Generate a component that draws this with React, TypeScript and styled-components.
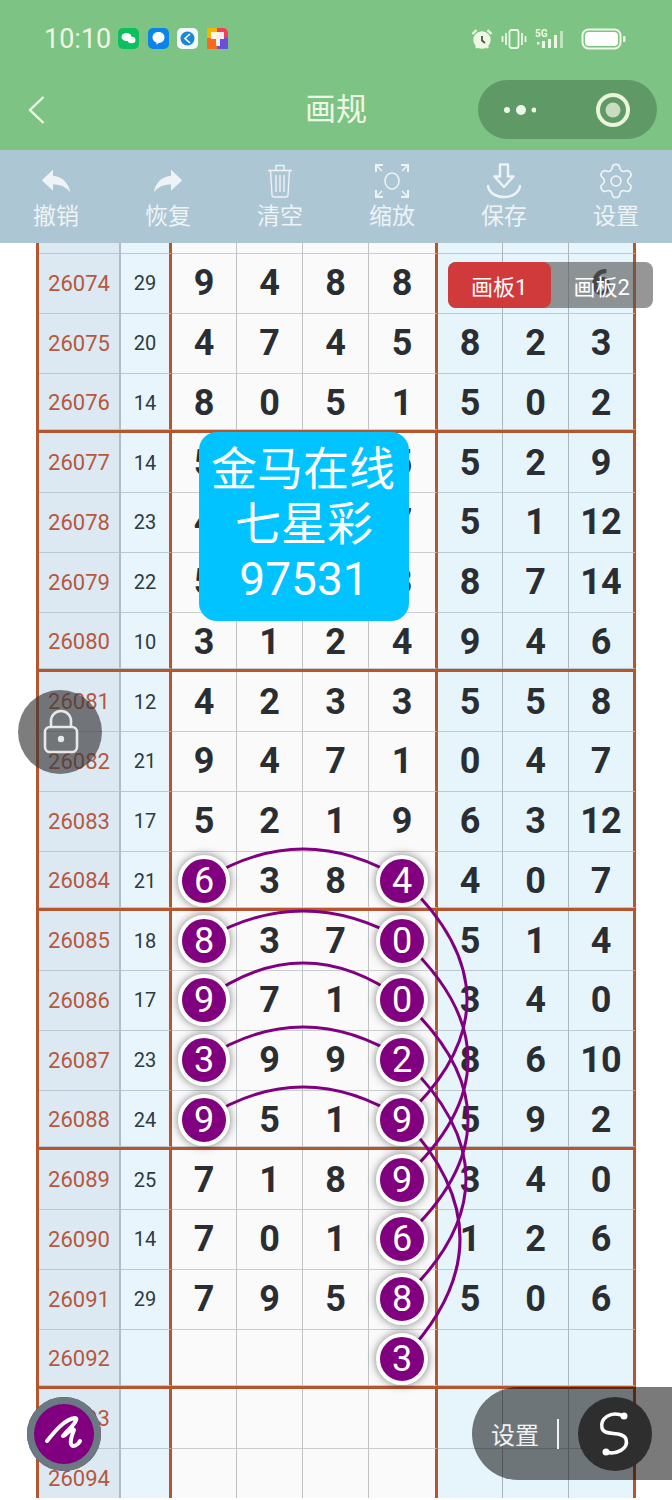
import React from "react"
import styled, { createGlobalStyle } from "styled-components"
import { Settings } from "lucide-react"

const GlobalStyle = createGlobalStyle`
  html, body { margin: 0; padding: 0; background: #fff; }
  body { font-family: Roboto, "Noto Sans CJK SC", sans-serif; }
`

const Page = styled.div`
  width: 672px;
  height: 1500px;
  display: flex;
  flex-direction: column;
  overflow: hidden;
  background: #fff;
`
const StatusBar = styled.div`
  height: 80px;
  box-sizing: border-box;
  padding: 22px 45px 0 44px;
  background: #7dc383;
  display: flex;
  align-items: flex-start;
  color: #eef7e6;
`
const Clock = styled.span`
  font-size: 27px;
  line-height: 34px;
  margin-right: 7px;
`
const AppIcons = styled.div`
  display: flex;
  gap: 8.5px;
  margin-top: 6px;
`
const AppIcon = styled.svg`
  width: 21px;
  height: 21px;
  display: block;
`
const StatusIcons = styled.div`
  margin-left: auto;
  display: flex;
  align-items: center;
  height: 34px;
  gap: 8px;
`
const NavBar = styled.div`
  height: 70px;
  background: #7dc383;
  position: relative;
  display: flex;
  align-items: flex-start;
  justify-content: space-between;
  padding: 0 15px 0 26px;
  box-sizing: border-box;
`
const Title = styled.div`
  position: absolute;
  left: 0;
  right: 0;
  top: 12px;
  text-align: center;
  color: #eef7e6;
  font-size: 31px;
  line-height: 36px;
`
const Capsule = styled.div`
  width: 179px;
  height: 59px;
  border-radius: 30px;
  background: #5f9a66;
  display: flex;
  align-items: center;
  justify-content: space-between;
  box-sizing: border-box;
  padding: 0 27px 0 26px;
`
const Toolbar = styled.div`
  height: 93px;
  background: #adc6d4;
  display: grid;
  grid-template-columns: repeat(6, 112px);
`
const ToolItem = styled.div`
  display: flex;
  flex-direction: column;
  align-items: center;
  color: #eef3f6;
  padding-top: 13px;
  font-size: 23px;
  line-height: 30px;
  svg { display: block; width: 36px; height: 36px; margin-bottom: 3px; }
  svg.lucide { width: 40px; height: 40px; margin: -2px 0 1px; }
`
const Board = styled.div`
  position: relative;
  height: 1255px;
  overflow: hidden;
`
const Row = styled.div<{ $heavy?: boolean; $stub?: boolean }>`
  display: grid;
  grid-template-columns: 82px 51px 65px 66px 66px 69px 65px 66px 67px;
  width: 600px;
  margin-left: 36px;
  height: ${(p) => (p.$stub ? "11px" : "59.75px")};
  box-sizing: border-box;
  border-left: 3px solid #b5562f;
  border-bottom: ${(p) => (p.$heavy ? "3px solid #b5562f" : "0")};
  > div { padding-top: ${(p) => (p.$heavy ? "3px" : "0")}; }
`
const Cell = styled.div<{ $kind: "issue" | "sum" | "main" | "side"; $wall?: boolean }>`
  display: flex;
  align-items: center;
  justify-content: center;
  box-sizing: border-box;
  border-bottom: 1px solid ${(p) => (p.$kind === "main" ? "#c9cdd0" : "#bcc8d0")};
  border-right: ${(p) =>
    p.$wall ? "3px solid #b5562f" : p.$kind === "issue" ? "2px solid #aebcc6" : p.$kind === "main" ? "1px solid #bfc3c6" : "1px solid #aab6be"};
  background: ${(p) =>
    p.$kind === "issue" ? "#dce9f2" : p.$kind === "sum" ? "#e8f5fc" : p.$kind === "main" ? "#fafafa" : "#e6f4fc"};
  color: ${(p) => (p.$kind === "issue" ? "#b5583f" : p.$kind === "sum" ? "#2d3a40" : "#2a2e33")};
  font-size: ${(p) => (p.$kind === "issue" ? "22px" : p.$kind === "sum" ? "20px" : "36px")};
  font-weight: ${(p) => (p.$kind === "main" || p.$kind === "side" ? 700 : 400)};
`
const Ball = styled.span`
  position: relative;
  z-index: 2;
  width: 44px;
  height: 44px;
  flex: none;
  border-radius: 50%;
  box-sizing: content-box;
  border: 4px solid #fff;
  background: #800080;
  box-shadow: 0 0 8px rgba(0, 0, 0, 0.5);
  color: #fff;
  font-size: 36px;
  font-weight: 400;
  display: flex;
  align-items: center;
  justify-content: center;
`
const Curves = styled.svg`
  position: absolute;
  left: 0;
  top: 0;
  z-index: 1;
`
const Stamp = styled.div`
  position: absolute;
  z-index: 3;
  left: 199px;
  top: 189px;
  width: 210px;
  height: 189px;
  box-sizing: border-box;
  padding-top: 10px;
  border-radius: 18px;
  background: #00c3ff;
  color: #fff;
  font-size: 46px;
  line-height: 55px;
  text-align: center;
  text-indent: -2px;
`
const Tabs = styled.div`
  position: absolute;
  z-index: 3;
  left: 448px;
  top: 19px;
  display: flex;
  width: 205px;
  height: 46px;
  border-radius: 8px;
  background: rgba(85, 85, 85, 0.62);
  color: #fff;
  font-size: 22px;
`
const Tab = styled.div<{ $active?: boolean }>`
  flex: 1;
  display: flex;
  align-items: center;
  justify-content: center;
  border-radius: 8px;
  background: ${(p) => (p.$active ? "#d13a3a" : "transparent")};
`
const LockButton = styled.div`
  position: absolute;
  z-index: 3;
  left: 18px;
  top: 447px;
  width: 84px;
  height: 84px;
  border-radius: 50%;
  background: rgba(55, 55, 55, 0.65);
`
const PenButton = styled.div`
  position: absolute;
  z-index: 3;
  left: 27px;
  top: 1154px;
  width: 74px;
  height: 74px;
  box-sizing: border-box;
  border-radius: 50%;
  background: #800080;
  box-shadow: inset 0 0 0 7px #6b7a80;
`
const SidePanel = styled.div`
  position: absolute;
  z-index: 3;
  right: 0;
  top: 1144px;
  width: 200px;
  height: 93px;
  box-sizing: border-box;
  border-radius: 47px 0 0 47px;
  background: rgba(0, 0, 0, 0.52);
  display: flex;
  align-items: center;
  padding-left: 19px;
  color: #f2f2f2;
  font-size: 24px;
`
const Divider = styled.span`
  width: 2px;
  height: 30px;
  margin: 0 19px 0 18px;
  background: #f2f2f2;
`
const SketchButton = styled.div`
  width: 74px;
  height: 74px;
  border-radius: 50%;
  background: #2e2e2e;
`

type RowData = { issue: string; sum?: string; main?: string[]; side?: string[]; balls?: number[]; heavy?: boolean }

// digits the stamp and the red tab cover are left empty
const rows: RowData[] = [
  { issue: "26074", sum: "29", main: ["9", "4", "8", "8"], side: ["", "", "6"] },
  { issue: "26075", sum: "20", main: ["4", "7", "4", "5"], side: ["8", "2", "3"] },
  { issue: "26076", sum: "14", main: ["8", "0", "5", "1"], side: ["5", "0", "2"], heavy: true },
  { issue: "26077", sum: "14", main: ["5", "", "", "5"], side: ["5", "2", "9"] },
  { issue: "26078", sum: "23", main: ["4", "", "", "7"], side: ["5", "1", "12"] },
  { issue: "26079", sum: "22", main: ["5", "", "", "3"], side: ["8", "7", "14"] },
  { issue: "26080", sum: "10", main: ["3", "1", "2", "4"], side: ["9", "4", "6"], heavy: true },
  { issue: "26081", sum: "12", main: ["4", "2", "3", "3"], side: ["5", "5", "8"] },
  { issue: "26082", sum: "21", main: ["9", "4", "7", "1"], side: ["0", "4", "7"] },
  { issue: "26083", sum: "17", main: ["5", "2", "1", "9"], side: ["6", "3", "12"] },
  { issue: "26084", sum: "21", main: ["6", "3", "8", "4"], side: ["4", "0", "7"], balls: [0, 3], heavy: true },
  { issue: "26085", sum: "18", main: ["8", "3", "7", "0"], side: ["5", "1", "4"], balls: [0, 3] },
  { issue: "26086", sum: "17", main: ["9", "7", "1", "0"], side: ["3", "4", "0"], balls: [0, 3] },
  { issue: "26087", sum: "23", main: ["3", "9", "9", "2"], side: ["8", "6", "10"], balls: [0, 3] },
  { issue: "26088", sum: "24", main: ["9", "5", "1", "9"], side: ["5", "9", "2"], balls: [0, 3], heavy: true },
  { issue: "26089", sum: "25", main: ["7", "1", "8", "9"], side: ["3", "4", "0"], balls: [3] },
  { issue: "26090", sum: "14", main: ["7", "0", "1", "6"], side: ["1", "2", "6"], balls: [3] },
  { issue: "26091", sum: "29", main: ["7", "9", "5", "8"], side: ["5", "0", "6"], balls: [3] },
  { issue: "26092", main: ["", "", "", "3"], balls: [3], heavy: true },
  { issue: "26093" },
  { issue: "26094" },
]

const blank = ["", "", "", ""]
const blankSide = ["", "", ""]

const BoardRow: React.FC<{ row: RowData }> = ({ row }) => (
  <Row $heavy={row.heavy}>
    <Cell $kind="issue">{row.issue}</Cell>
    <Cell $kind="sum" $wall>{row.sum}</Cell>
    {(row.main ?? blank).map((n, i) => (
      <Cell key={i} $kind="main" $wall={i === 3}>
        {row.balls?.includes(i) ? <Ball>{n}</Ball> : n}
      </Cell>
    ))}
    {(row.side ?? blankSide).map((n, i) => (
      <Cell key={i} $kind="side" $wall={i === 2}>{n}</Cell>
    ))}
  </Row>
)

const StubRow = () => (
  <Row $stub>
    <Cell $kind="issue" />
    <Cell $kind="sum" $wall />
    {blank.map((_, i) => <Cell key={i} $kind="main" $wall={i === 3} />)}
    {blankSide.map((_, i) => <Cell key={i} $kind="side" $wall={i === 2} />)}
  </Row>
)

const arcs = [
  { y: 880, top: 849 },
  { y: 940, top: 911 },
  { y: 1000, top: 963 },
  { y: 1059, top: 1027 },
  { y: 1119, top: 1087 },
]
const loops = [
  { y: 880, peak: 467 },
  { y: 940, peak: 468 },
  { y: 1000, peak: 468 },
  { y: 1059, peak: 466 },
  { y: 1119, peak: 460 },
]

const ToolIcon = {
  undo: (
    <svg viewBox="0 0 24 24" fill="currentColor">
      <path d="M10 8.500V4.500L2.500 11.500l7.500 7v-4.200c5 0 8.700 1.600 11.500 5.200-1-5.200-4.300-10.300-11.500-11z" />
    </svg>
  ),
  redo: (
    <svg viewBox="0 0 24 24" fill="currentColor">
      <path d="M14 8.500V4.500l7.500 7-7.500 7v-4.200c-5 0-8.700 1.600-11.500 5.200 1-5.200 4.300-10.300 11.500-11z" />
    </svg>
  ),
  trash: (
    <svg viewBox="0 0 36 36" fill="none" stroke="currentColor" strokeWidth="1.400">
      <path d="M6 7.500h24M14 7V2.500h8V7M8.500 8l1.500 24q.2 2 2.200 2h11.600q2 0 2.200-2L27.500 8" />
      <path d="M14 12v17M18 12v17M22 12v17" />
    </svg>
  ),
  zoom: (
    <svg viewBox="0 0 36 36" fill="none" stroke="currentColor" strokeWidth="2">
      <ellipse cx="18" cy="18" rx="7" ry="8" strokeWidth="1.500" />
      <path d="M2 9V2h7M27 2h7v7M2 27v7h7M27 34h7v-7" />
      <path d="M2 2l6 6M34 2l-6 6M2 34l6-6M34 34l-6-6" strokeWidth="1.500" />
    </svg>
  ),
  save: (
    <svg viewBox="0 0 36 36" fill="none" stroke="currentColor" strokeWidth="2.400" strokeLinejoin="round" strokeLinecap="round">
      <path d="M14 1.500h8v12h5.500L18 24 8.500 13.500H14z" />
      <path d="M2 23c1 7 8 11 16 11s15-4 16-11" />
    </svg>
  ),
}

const App: React.FC = () => {
  return (
    <Page>
      <GlobalStyle />
      <StatusBar>
        <Clock>10:10</Clock>
        <AppIcons>
          <AppIcon viewBox="0 0 21 21">
            <rect width="21" height="21" rx="5" fill="#0bc15f" />
            <ellipse cx="8.500" cy="9" rx="5" ry="4" fill="#fff" />
            <ellipse cx="13.500" cy="12" rx="4" ry="3.300" fill="#fff" />
          </AppIcon>
          <AppIcon viewBox="0 0 21 21">
            <rect width="21" height="21" rx="5" fill="#0a84e8" />
            <path d="M10.500 4c4 0 6 2.500 6 5.500S14 15 10.500 15l-2 2v-2.500C6 13.500 4.500 12 4.500 9.500 4.500 6.500 6.500 4 10.500 4z" fill="#fff" />
          </AppIcon>
          <AppIcon viewBox="0 0 21 21">
            <rect width="21" height="21" rx="5" fill="#f5f8fa" />
            <circle cx="10.500" cy="10.500" r="7" fill="#1c86d8" />
            <path d="M13 6l-5 4.500 5 4.500" fill="none" stroke="#fff" strokeWidth="1.600" />
          </AppIcon>
          <AppIcon viewBox="0 0 21 21">
            <rect width="21" height="21" rx="5" fill="#f23e5c" />
            <rect x="0" width="10" height="10" fill="#f7b500" />
            <rect x="0" y="10" width="10" height="11" fill="#f66a1f" />
            <rect x="11" y="10" width="10" height="11" fill="#6a4fd8" />
            <path d="M4 4h13v7h-4v7h-4v-7H4z" fill="#fff" opacity="0.9" />
          </AppIcon>
        </AppIcons>
        <StatusIcons>
          <svg width="22" height="22" viewBox="0 0 22 22" fill="none" stroke="#eef7e6" strokeWidth="2.400">
            <circle cx="11" cy="12" r="7.500" fill="#eef7e6" />
            <path d="M11 8v4.500l3 2.500" stroke="#3f5f45" strokeWidth="1.800" />
            <path d="M1.500 6l4-4M20.500 6l-4-4M5 20l1.500-2M17 20l-1.500-2" />
          </svg>
          <svg width="26" height="22" viewBox="0 0 26 22" fill="none" stroke="#eef7e6" strokeWidth="1.800">
            <rect x="8.500" y="2" width="9" height="18" rx="2" />
            <path d="M5 5v12M21 5v12M1.500 8v6M24.500 8v6" />
          </svg>
          <svg width="38" height="22" viewBox="0 0 38 22" fill="#eef7e6">
            <text x="0" y="9" fontSize="10" fontWeight="700" fontFamily="Roboto, sans-serif">5G</text>
            <rect x="2" y="14" width="2.500" height="2.500" />
            <rect x="7" y="13" width="3" height="7" />
            <rect x="13" y="11" width="3" height="9" />
            <rect x="19" y="7" width="3" height="13" />
            <rect x="25" y="3" width="3" height="17" opacity="0.6" />
          </svg>
          <svg width="46" height="22" viewBox="0 0 46 22">
            <rect x="1.500" y="1.500" width="38" height="19" rx="6" fill="none" stroke="#eef7e6" strokeWidth="2" />
            <rect x="4" y="4" width="33" height="14" rx="4" fill="#fff" />
            <rect x="42" y="8" width="2.500" height="6" rx="1" fill="#eef7e6" />
          </svg>
        </StatusIcons>
      </StatusBar>
      <NavBar>
        <svg width="20" height="30" viewBox="0 0 20 30" fill="none" stroke="#eef7e6" strokeWidth="2.400" style={{ marginTop: 15 }}>
          <path d="M17.500 2L4 15l13.500 13" />
        </svg>
        <Title>画规</Title>
        <Capsule>
          <svg width="32" height="12" viewBox="0 0 32 12" fill="#eef7e6">
            <circle cx="3" cy="6" r="3" />
            <circle cx="17" cy="6" r="5" />
            <circle cx="30" cy="6" r="2.500" />
          </svg>
          <svg width="34" height="34" viewBox="0 0 34 34">
            <circle cx="17" cy="17" r="15" fill="none" stroke="#eaf5dc" strokeWidth="4" />
            <circle cx="17" cy="17" r="7.500" fill="#c9dcc0" />
          </svg>
        </Capsule>
      </NavBar>
      <Toolbar>
        <ToolItem>{ToolIcon.undo}撤销</ToolItem>
        <ToolItem>{ToolIcon.redo}恢复</ToolItem>
        <ToolItem>{ToolIcon.trash}清空</ToolItem>
        <ToolItem>{ToolIcon.zoom}缩放</ToolItem>
        <ToolItem>{ToolIcon.save}保存</ToolItem>
        <ToolItem>
          <Settings strokeWidth={1} />
          设置
        </ToolItem>
      </Toolbar>
      <Board>
        <StubRow />
        {rows.map((row) => (
          <BoardRow key={row.issue} row={row} />
        ))}
        <Curves width="672" height="1255" viewBox="0 243 672 1255" fill="none" stroke="#800080" strokeWidth="3">
          {arcs.map((a) => (
            <path key={a.y} d={`M204 ${a.y} Q303 ${2 * a.top - a.y} 403 ${a.y}`} />
          ))}
          {loops.map((l) => (
            <path key={l.y} d={`M403 ${l.y} Q${2 * l.peak - 403} ${l.y + 120} 403 ${l.y + 239}`} />
          ))}
        </Curves>
        <Stamp>
          金马在线
          <br />
          七星彩
          <br />
          97531
        </Stamp>
        <Tabs>
          <Tab $active>画板1</Tab>
          <Tab>画板2</Tab>
        </Tabs>
        <LockButton>
          <svg width="84" height="84" viewBox="0 0 84 84" fill="none" stroke="#e8e8e8" strokeWidth="2.600">
            <rect x="27" y="37" width="32" height="25" rx="5" />
            <path d="M33 37V31a10 10 0 0 1 20 0v6" />
            <circle cx="43" cy="49" r="3.200" fill="#e8e8e8" stroke="none" />
          </svg>
        </LockButton>
        <PenButton>
          <svg width="74" height="74" viewBox="0 0 74 74" fill="none" stroke="#fff" strokeWidth="4" strokeLinecap="round" strokeLinejoin="round">
            <path d="M20 44C28 34 38 22 48 21C53 22 42 32 36 39C40 38 44 30 47 33C44 40 42 48 46 49C49 49 52 46 53 44" />
          </svg>
        </PenButton>
        <SidePanel>
          设置
          <Divider />
          <SketchButton>
            <svg width="74" height="74" viewBox="0 0 74 74" fill="none" stroke="#fff" strokeWidth="3.500">
              <path d="M46 19C32 13 22 22 24 31C26 40 44 33 48 42C51 52 38 58 28 55" />
              <circle cx="46" cy="19" r="3.500" fill="#fff" stroke="none" />
              <circle cx="28" cy="55" r="3.500" fill="#fff" stroke="none" />
            </svg>
          </SketchButton>
        </SidePanel>
      </Board>
    </Page>
  )
}

export default App
